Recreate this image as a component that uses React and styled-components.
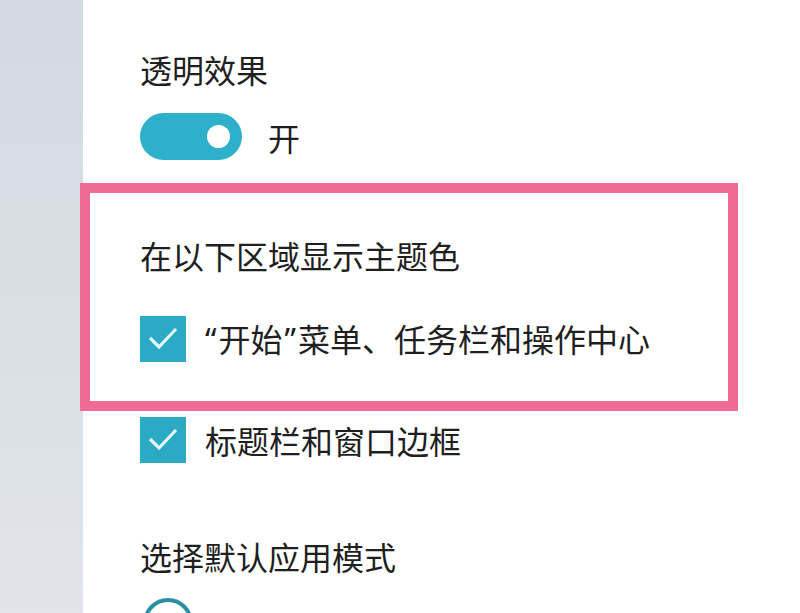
import React from 'react';
import styled, { createGlobalStyle } from 'styled-components';

const GlobalStyle = createGlobalStyle`
    html, body {
        margin:0;
        padding:0;
        width:800px;
        height:613px;
        overflow:hidden;
        background:#fff;
    }
    body {
        font-family:"Noto Sans CJK SC","Noto Sans",sans-serif;
        color:#1f1f1f;
    }
`

const Page = styled.div`
    position:relative;
    display:flex;
    width:800px;
    height:613px;
    overflow:hidden;
`

const Sidebar = styled.div`
    width:83px;
    flex-shrink:0;
    background:linear-gradient(180deg,#d3d9e1 0%,#dadfe5 50%,#e1e5e9 100%);
`

const Main = styled.div`
    flex:1;
    padding:49px 0 0 57px;
    display:flex;
    flex-direction:column;
    align-items:flex-start;
`

const Heading = styled.div`
    font-size:32px;
    line-height:40px;
    margin-top:${({top})=>top || 0}px;
    white-space:nowrap;
    flex-shrink:0;
`

const ToggleRow = styled.div`
    display:flex;
    align-items:center;
    gap:26px;
    margin-top:24px;
    flex-shrink:0;
`

const Toggle = styled.div`
    width:102px;
    height:47px;
    border-radius:24px;
    background:#2eb0ca;
    display:flex;
    align-items:center;
    justify-content:flex-end;
    padding-right:12px;
    box-sizing:border-box;
`

const Knob = styled.div`
    width:23px;
    height:23px;
    border-radius:50%;
    background:#fff;
`

const Label = styled.span`
    font-size:32px;
    line-height:40px;
    white-space:nowrap;
`

const Quote = styled.span`
    font-family:"Noto Sans","DejaVu Sans",sans-serif;
    padding:0 2px;
`

const CheckRow = styled.div`
    display:flex;
    align-items:center;
    gap:${({gap})=>gap}px;
    margin-top:${({top})=>top}px;
    flex-shrink:0;
`

const Box = styled.div`
    width:46px;
    height:46px;
    background:#2ba9c5;
    display:flex;
    align-items:center;
    justify-content:center;
`

const Radio = styled.div`
    width:42px;
    height:42px;
    flex-shrink:0;
    border-radius:50%;
    border:4px solid #2a8fa3;
    margin:22px 0 0 3px;
`

const Highlight = styled.div`
    position:absolute;
    left:80px;
    top:183px;
    width:658px;
    height:228px;
    box-sizing:border-box;
    border:10px solid #f06a94;
    pointer-events:none;
`

const Check = ()=>(
    <Box>
        <svg width="46" height="46" viewBox="0 0 46 46">
            <polyline points="10,22 19,31 36,13" fill="none" stroke="#e2f7fb" strokeWidth="3.2"/>
        </svg>
    </Box>
)

const App = ()=>{
    return(
        <>
        <GlobalStyle/>
        <Page>
            <Sidebar/>
            <Main>
                <Heading>透明效果</Heading>
                <ToggleRow>
                    <Toggle><Knob/></Toggle>
                    <Label>开</Label>
                </ToggleRow>

                <Heading top={75}>在以下区域显示主题色</Heading>
                <CheckRow top={41} gap={17}>
                    <Check/>
                    <Label><Quote>“</Quote>开始<Quote>”</Quote>菜单、任务栏和操作中心</Label>
                </CheckRow>
                <CheckRow top={55} gap={19}>
                    <Check/>
                    <Label>标题栏和窗口边框</Label>
                </CheckRow>

                <Heading top={73}>选择默认应用模式</Heading>
                <Radio/>
            </Main>
            <Highlight/>
        </Page>
        </>
    )
}

export default App;
